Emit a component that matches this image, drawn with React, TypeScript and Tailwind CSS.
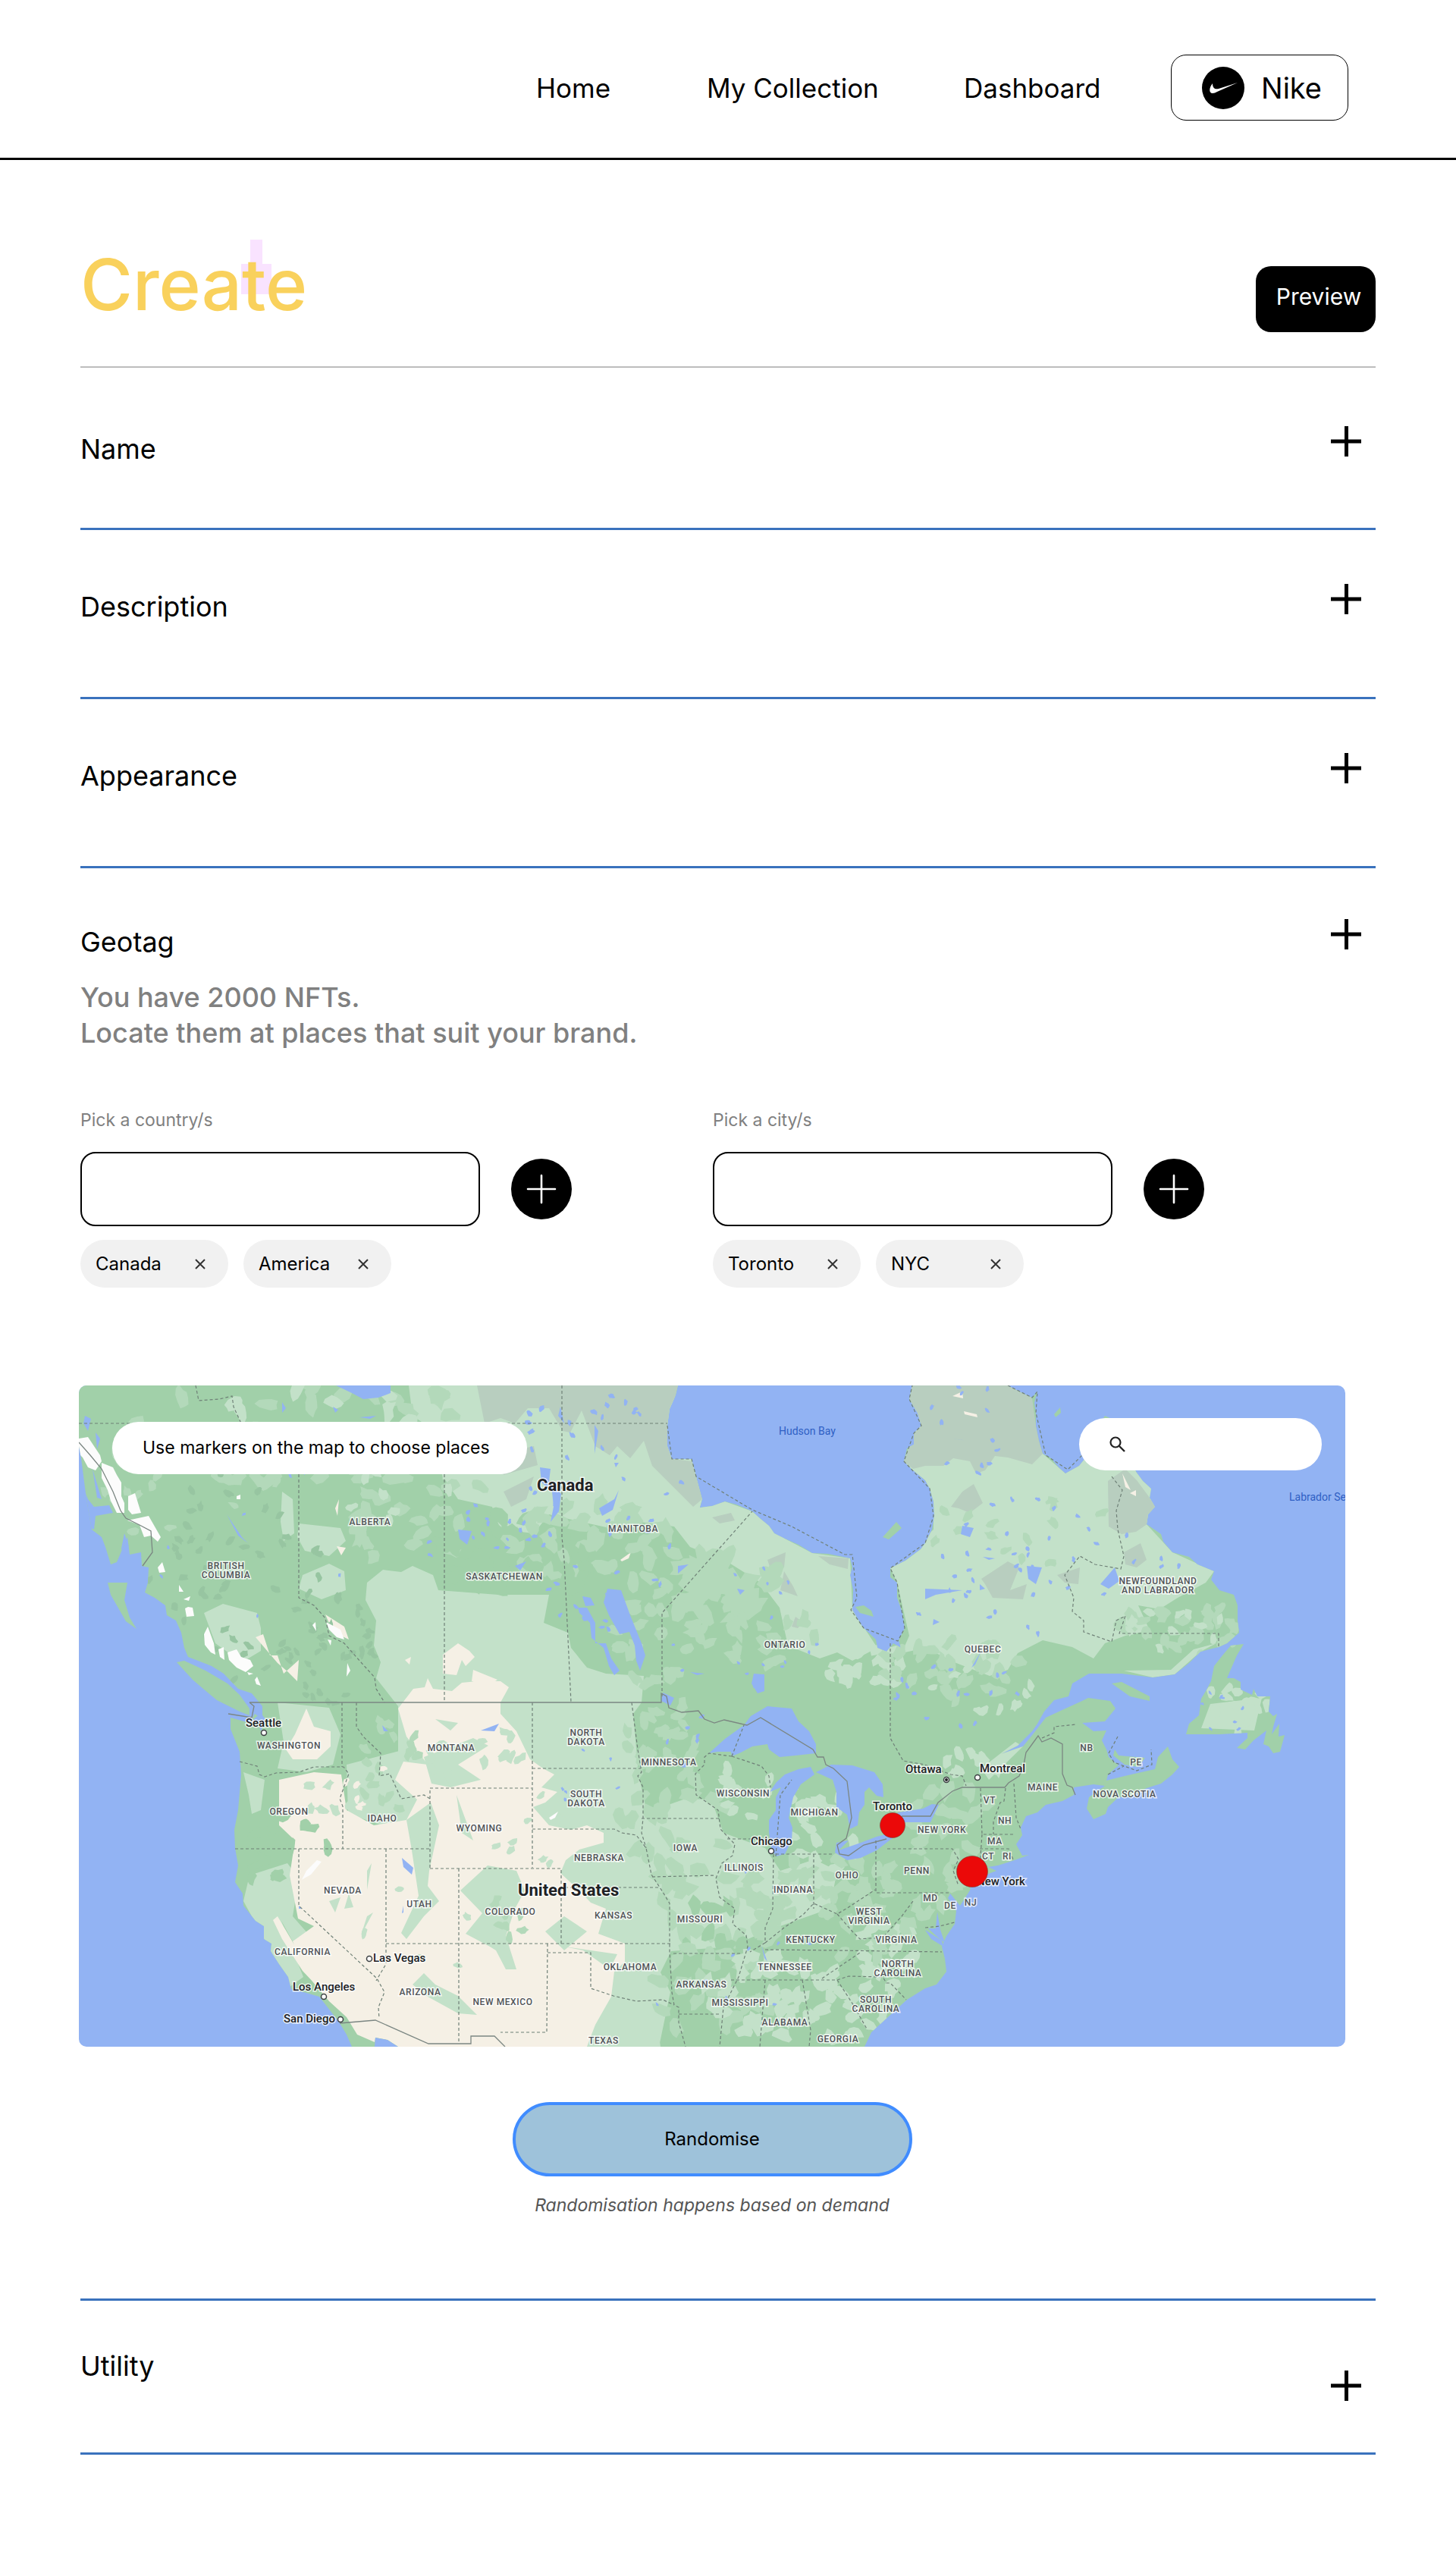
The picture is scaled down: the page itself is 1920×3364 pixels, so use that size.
import { useState } from 'react'

const navLinks = [
  { label: 'Home', width: 'w-[225px]' },
  { label: 'My Collection', width: 'w-[339px]' },
  { label: 'Dashboard', width: 'w-[273px]' },
]

const stateLabels: [number, number, string[]][] = [
  [384, 184, ['ALBERTA']],
  [194, 242, ['BRITISH', 'COLUMBIA']],
  [561, 256, ['SASKATCHEWAN']],
  [731, 193, ['MANITOBA']],
  [931, 346, ['ONTARIO']],
  [1192, 352, ['QUEBEC']],
  [1423, 262, ['NEWFOUNDLAND', 'AND LABRADOR']],
  [277, 479, ['WASHINGTON']],
  [277, 566, ['OREGON']],
  [400, 575, ['IDAHO']],
  [491, 482, ['MONTANA']],
  [528, 588, ['WYOMING']],
  [348, 670, ['NEVADA']],
  [449, 688, ['UTAH']],
  [569, 698, ['COLORADO']],
  [295, 751, ['CALIFORNIA']],
  [450, 804, ['ARIZONA']],
  [559, 817, ['NEW MEXICO']],
  [669, 462, ['NORTH', 'DAKOTA']],
  [669, 543, ['SOUTH', 'DAKOTA']],
  [778, 501, ['MINNESOTA']],
  [876, 542, ['WISCONSIN']],
  [970, 567, ['MICHIGAN']],
  [800, 614, ['IOWA']],
  [686, 627, ['NEBRASKA']],
  [877, 640, ['ILLINOIS']],
  [942, 669, ['INDIANA']],
  [1013, 650, ['OHIO']],
  [705, 703, ['KANSAS']],
  [819, 708, ['MISSOURI']],
  [965, 735, ['KENTUCKY']],
  [1042, 698, ['WEST', 'VIRGINIA']],
  [1078, 735, ['VIRGINIA']],
  [931, 771, ['TENNESSEE']],
  [1080, 767, ['NORTH', 'CAROLINA']],
  [727, 771, ['OKLAHOMA']],
  [821, 794, ['ARKANSAS']],
  [872, 818, ['MISSISSIPPI']],
  [1051, 814, ['SOUTH', 'CAROLINA']],
  [931, 844, ['ALABAMA']],
  [1001, 866, ['GEORGIA']],
  [692, 868, ['TEXAS']],
  [1138, 590, ['NEW YORK']],
  [1105, 644, ['PENN']],
  [1123, 680, ['MD']],
  [1149, 690, ['DE']],
  [1176, 686, ['NJ']],
  [1199, 625, ['CT']],
  [1224, 625, ['RI']],
  [1208, 605, ['MA']],
  [1221, 578, ['NH']],
  [1201, 551, ['VT']],
  [1271, 534, ['MAINE']],
  [1329, 482, ['NB']],
  [1394, 501, ['PE']],
  [1379, 543, ['NOVA SCOTIA']],
]

const cities = [
  { name: 'Seattle', x: 220, y: 450, dot: [244, 458] },
  { name: 'Las Vegas', x: 388, y: 760, dot: [383, 756] },
  { name: 'Los Angeles', x: 282, y: 798, dot: [323, 806] },
  { name: 'San Diego', x: 270, y: 840, dot: [345, 836] },
  { name: 'Chicago', x: 886, y: 606, dot: [913, 614] },
  { name: 'Toronto', x: 1047, y: 560, dot: null },
  { name: 'Ottawa', x: 1090, y: 511, dot: [1144, 520] },
  { name: 'Montreal', x: 1188, y: 510, dot: [1185, 517] },
  { name: 'New York', x: 1184, y: 659, dot: null },
]

const land = [
  // mainland, clockwise from the north-west corner
  'M0 0H790L787 13 779 31 776 53V80L782 97H808L814 120 822 150 819 161 835 159 852 153 867 157 888 166 899 176 910 185 917 195 931 202 949 210 967 221 988 222 1017 228 1020 240 1017 250 1021 270 1020 296 1033 318 1051 335 1053 346 1065 351 1074 340 1084 346 1081 336 1089 320 1086 300 1079 280V260L1070 253V241L1090 231 1110 216 1116 208 1125 190 1128 172 1127 153 1122 136 1116 125 1099 111 1088 100 1092 83 1101 78V63L1111 53 1106 36 1095 18 1099 0H1225L1240 8 1257 16 1264 8 1260 23 1262 36V53L1266 73 1271 90 1282 96 1292 108 1301 116 1319 106 1327 96 1334 70 1353 40 1362 44 1380 90 1395 115 1403 126 1414 136 1412 148 1419 160 1410 170 1408 183 1427 196 1430 206 1442 220 1464 226 1475 236 1497 245 1493 256 1504 270 1523 276 1528 290V310L1530 326 1514 340 1503 345 1479 351 1464 366 1445 381 1416 385 1375 380H1332L1310 393 1305 410 1286 415 1273 430 1264 446 1257 456 1238 475 1216 486 1245 476 1258 460 1275 438 1301 426 1323 416 1331 412 1360 416 1367 426 1353 443 1323 445 1338 456 1355 455 1349 468 1355 480 1358 490 1371 501 1357 513 1355 521 1375 516 1392 512 1419 506 1423 490 1436 476 1442 493 1451 503 1442 513 1427 525 1408 531 1386 543 1371 543 1357 556 1354 565 1338 572 1329 558 1332 543 1353 528 1338 526 1312 530V540L1297 548 1275 553 1264 563 1249 568 1242 583 1244 593 1236 605 1244 620 1253 619 1234 626 1212 633 1199 635 1210 640 1194 646 1178 650 1175 666 1162 686 1149 670 1146 676 1157 693 1155 710 1144 726 1138 740 1142 756 1144 773 1131 790 1116 795 1092 810 1070 830 1045 853 1036 872H421L407 863 391 860 390 872H360L353 856 344 841 328 820 317 806 300 801 280 796 276 780 264 763 253 746 254 736 244 730V713L233 706 217 686 216 670 206 655 210 633 206 610 205 586 210 560 214 513 212 483 200 453V438L225 445 232 433 242 440V423L228 406 210 400 191 380 175 370 144 358 139 346 135 326 128 310 116 303 114 290 100 280 87 273 91 260 92 240 83 238 82 220 67 223 64 200 50 233 42 236 35 213 30 200 17 190 14 173 10 150 3 96 0 80Z',
  // Vancouver Island
  'M129 365 139 363 167 376 196 393 212 408 225 426V435L212 430 182 415 164 400 150 388Z',
  // Haida Gwaii
  'M38 260H64L60 283 67 306 76 321 62 311 50 290 42 276Z',
  // Newfoundland
  'M1508 356 1519 343 1536 341 1527 356 1514 386H1523L1532 391V401L1547 408 1549 400 1554 410H1571L1569 430 1575 436 1580 433 1575 450 1573 460 1583 446 1582 463 1590 461 1584 483 1575 485 1569 476 1562 473 1566 455 1549 468 1538 480 1527 478 1541 465V458L1504 460H1460L1464 446 1477 435 1480 413 1486 403 1493 390 1497 370Z',
  // Anticosti and Prince Edward Island
  'M1362 393 1375 391 1412 410V416L1386 410Z',
  'M1366 480 1371 488 1406 491 1397 503 1379 500 1364 488Z',
  // islands in the bays
  'M1024 292 1035 290 1045 297 1048 305 1030 300ZM1286 38 1294 29 1295 36 1288 42ZM1060 200 1078 180 1085 188 1068 203Z',
].join('')

const lightLand =
  'M380 260 401 243 425 246 440 238 467 250 474 270 553 276 620 276 613 313 645 326 649 346 670 372 695 380 745 383 742 418 731 433 738 513 749 563 800 545 834 546 850 590 905 610 925 640 970 625 1000 640 990 690 905 720 860 740 781 746 756 796 767 872H560L421 600V423L392 386 398 365 389 343 392 310 378 283Z' +
  'M435 0H790L776 53 782 97 808 97 822 150 819 161 852 153 888 166 931 202 967 221 1017 228 1020 296 1053 346 1020 363 1000 352 977 360 935 343 924 293 899 260 856 233 806 213 785 186 740 180 700 188 663 180 620 170 600 195 556 190 545 160 500 150 480 120 470 60 440 40Z' +
  'M1085 353 1095 330 1079 260 1070 241 1127 190V153L1088 100 1101 63 1095 0H1225L1257 60 1271 90 1301 116 1327 96 1360 43 1395 115 1414 136 1419 160 1408 183 1442 220 1497 245 1486 260 1449 280 1425 295 1397 290 1412 323 1380 330 1353 340 1338 360 1310 345 1271 336 1238 353 1225 375 1201 383 1157 366 1116 346Z' +
  'M1378 376 1440 375 1470 348 1500 340 1479 351 1445 381 1416 385Z' +
  'M1190 505 1235 470 1245 476 1200 520Z' +
  'M165 300 190 288 235 300 240 320 240 350 215 365 180 340Z' +
  'M295 250 330 235 350 245 352 270 320 282 290 268Z' +
  'M290 182 345 188 352 205 330 225 298 218 288 200Z' +
  'M268 140 282 150 284 195 270 205 266 180ZM95 60 112 55 110 78 98 80Z' +
  'M217 510 245 520 240 560 228 565 224 540ZM225 646 275 630 290 650 282 700 317 740V773L300 766 267 706 296 780 278 793 246 733 217 680Z' +
  'M262 418 330 425 345 460 335 500 300 510 262 505 270 470ZM353 500 430 480 440 570 400 580 355 565Z' +
  'M1492 420 1560 412 1550 455 1480 452Z' +
  'M700 800 760 760 780 800 765 872H680Z'

const tundra =
  'M525 0H790L787 13 779 31 776 80 784 97 808 100 814 120 822 150 810 160 780 130 756 106 745 73 727 96 710 80 700 92 681 80 663 33 648 62 638 60 620 30 592 30 575 50 556 43 535 50Z' +
  'M1099 0H1225L1257 16 1262 53 1271 90 1257 104 1225 95 1208 93 1195 112 1183 116 1175 100 1153 96 1140 106 1116 106 1100 110 1088 100 1101 63 1111 53 1095 18Z' +
  'M1357 126 1380 110 1395 125 1412 148 1423 160 1410 182 1394 193 1375 196 1358 186Z' +
  'M975 225 1015 228 1014 242 990 236ZM908 230 932 220 930 240 915 250ZM930 245 942 265 948 278 925 270ZM945 305 955 312 948 320 940 318ZM835 174 860 168 865 178 845 182Z' +
  'M1190 255 1225 232 1240 240 1228 270 1250 262 1245 282 1205 280 1195 262ZM1150 160 1165 140 1180 130 1192 155 1175 168 1160 162ZM1378 220 1400 208 1408 230 1395 240 1380 236ZM1290 250 1320 240 1318 262 1300 260ZM560 140 600 120 590 150 570 160ZM555 90 600 80 605 105 560 118Z'

const beige =
  'M421 426 441 400 456 398 460 386 467 400 492 403 505 392 525 390 556 390 567 398 556 418V433L577 456 595 493 612 505 627 513 610 530 631 536 615 550 599 556 620 580 649 586 670 580 692 590V603L660 612 642 626 635 643 660 666 675 682 695 690 685 723 720 736V760L706 773 702 806 681 843 670 872H421L407 863 391 860 390 866 367 856 353 833 330 812 303 780 282 733 310 713 289 703 278 646 285 600 264 580V520L310 510 346 513 353 560 389 580 432 573 446 546 417 520 428 496 460 500 445 480 432 463Z' +
  'M300 426 310 450 332 456V476L314 493 282 493 273 480 285 460Z' +
  'M233 332 243 328 252 356 262 356 270 380 290 362 288 390 276 378 262 366Z' +
  'M480 355 500 340 515 350 522 358 510 370 505 362 498 382 480 380ZM430 362 438 358 436 368ZM520 375 552 388 540 396 518 390ZM340 212 352 214 346 224ZM338 162 343 150 341 172ZM325 302 350 318 356 335 335 325Z' +
  'M714 230 728 220 725 228 716 232ZM801 292 818 290 815 296 802 297ZM765 182 778 184 768 186ZM1152 14 1165 8 1166 17ZM1167 34 1184 38 1185 42 1168 38ZM1376 116 1387 138 1380 134ZM1386 142 1394 138 1394 146Z' +
  'M262 700 275 722 300 765 312 790 295 772 268 730 256 705Z'

const beigeCover =
  'M432 573 464 550 475 580 462 640 460 660 475 680 455 700 432 730 425 722 440 690 448 673 439 613Z' +
  'M539 633 577 640 588 666 575 690 563 726 577 770 563 770 550 745 542 740 510 723 532 696 503 666Z' +
  'M455 490 520 465 540 475 500 500 530 520 490 530 465 525ZM470 440 500 445 490 455ZM440 790 455 775 470 790 500 805 525 830 500 828 460 806ZM498 540 520 600 505 590ZM615 720 640 700 670 720 640 745ZM380 640 386 630 380 665ZM330 680 345 675 338 695ZM356 670 362 688 350 690ZM380 700 388 695 372 725ZM640 740 710 750 700 770 665 745Z'

const snow =
  'M0 70 12 68 28 92 30 100 22 112 12 108 5 95 0 90ZM30 102 45 108 50 118 56 128V146L60 155V168L50 168 42 152 38 138 30 122ZM65 146 74 142 82 168 70 170 65 164ZM64 178 92 172 100 186 108 200 104 206 95 198 86 200 80 184ZM104 240 110 233 114 246 106 247ZM132 263 138 272 132 272ZM138 282 147 278 145 284ZM140 294 144 292 150 293 152 304 142 305ZM165 328 170 318 178 340 180 355 174 352 166 342ZM184 348 191 345 192 362 186 358ZM196 352 208 348 214 358 226 362 230 370 220 378 208 372 198 362ZM222 378 230 380 224 382ZM232 388 235 384 240 396 234 394ZM208 146 213 144 213 150 208 150ZM326 312 345 322 350 335 340 332 330 322ZM308 316 312 312 313 324ZM328 335 333 336 332 343ZM354 366 358 376 353 384ZM294 652 300 640 314 626 320 628 306 645 297 650ZM620 570 632 562 628 570 622 573Z'

const lakes =
  // Great Lakes
  'M831 485 852 466 877 448 886 436 908 423 940 426 949 443 963 456 972 473V485L945 488 924 490 910 480 908 473 888 476 873 484 861 489 860 483 842 483Z' +
  'M965 503 970 513 952 526 942 543 936 570 941 583 940 600 931 618 919 621 913 610 910 590V573L919 560V543L926 530 911 536 920 523 931 513 949 506Z' +
  'M972 510 992 500 1020 501 1049 510 1060 526 1061 543 1052 541 1042 530 1036 536V553L1029 563 1027 580 1017 585 1013 566 999 556V536L994 520Z' +
  'M999 603 1015 600 1002 613 1031 603 1052 595 1072 590 1074 596 1052 613 1031 623 1013 626 997 616Z' +
  'M1067 573 1081 563 1113 558 1125 552 1134 553 1123 576 1085 576 1070 578Z' +
  // Manitoba
  'M697 268 715 270 727 303 742 340 747 356 740 376 735 363 733 343 726 325 713 328 699 303 692 286Z' +
  'M658 293 670 293 681 313V340L695 340 702 360 713 376 706 382 699 370 692 346 676 333 674 313 660 300Z' +
  'M664 278 675 280 680 290 668 291ZM608 108 622 110 620 126 636 143 633 166 622 180 626 160 624 140 610 128Z' +
  'M339 0H411V10L395 16 375 18 360 10ZM890 380 904 381V403L895 406 887 393ZM426 623 441 636 439 645 428 635ZM770 405 785 412 780 422 768 416Z' +
  'M268 22 273 30 268 36ZM370 42 392 40 384 44ZM335 28 342 32 338 36ZM575 238 590 232 582 244ZM790 238 804 236 790 248ZM868 268 878 270 872 276ZM686 162 706 150 712 138 704 164 690 172ZM706 102 712 102 708 108ZM500 190 518 192 512 210 502 202ZM195 170 215 200 223 208 210 198ZM635 28 640 50 632 40ZM680 52 685 60 680 90ZM1165 185 1180 188 1175 200 1163 196ZM1250 238 1270 240 1262 262 1252 255ZM1347 262 1366 240 1372 258 1358 268ZM1192 226 1208 228 1200 230ZM1116 268 1165 270 1130 276 1116 282ZM1177 372 1190 350 1182 368ZM1127 308 1135 312 1126 316ZM1188 262 1195 268 1188 270ZM1150 70 1190 75 1165 72ZM806 378 825 380 815 382ZM290 686 294 690 290 690ZM426 696 428 686 428 695ZM900 738 908 760 904 755ZM530 455 554 446 548 456ZM400 448 408 456 402 456Z' +
  'M8 40 16 44 12 60 6 50ZM22 62 28 70 24 84ZM0 120 12 150 20 160 40 158 45 168 22 172 20 190 8 184ZM18 110 24 130 30 150 24 148ZM60 195 66 212 60 235 56 215Z' +
  'M225 445 240 432 246 440 240 456 236 444ZM1132 694 1136 718 1142 735 1133 728 1120 716 1130 716ZM1116 718 1138 732 1140 740 1124 730Z'

const dashedBorders =
  'M0 50H72M154 0 158 20 185 18 202 14 204 28 214 50M214 50H776M290 117V280L310 290 325 307 330 330 350 340 372 365 390 385 392 400 403 418M482 117V418M637 0V200L640 230 649 418M769 410V300L888 166M1070 340V465L1087 495 1115 500 1150 513 1165 515 1170 528' +
  'M776 53 782 97 808 97 814 120 888 164 940 186 1010 223H1020L1026 280 1018 296 1035 320 1080 337 1089 320 1079 260 1070 241 1116 208 1127 172 1122 136 1088 100 1101 63 1111 53 1095 18 1099 0M1225 0 1257 16 1264 8 1262 36 1275 92 1304 111 1325 90' +
  'M1362 120 1376 138 1368 165 1370 190 1378 225 1374 242 1340 236 1320 225 1300 250 1312 280 1310 298 1325 310 1325 325 1362 338 1368 310 1380 304 1372 327H1503V345' +
  'M212 496 235 502 238 513 245 516 260 511 290 510 310 503H349L356 512 344 545 348 555V611M347 418V503M366 418V450L375 463 398 485 396 515 410 512 425 545 455 540 463 545V636M463 545V531H597M206 611H463M290 611V686L393 782 403 800 395 820 396 835M405 611V763L392 785M405 736H780M463 637H636V662H765M501 637V868M598 418V636M598 505H741M598 585H706L716 590 735 593 748 610 755 645 770 668 779 683V746L782 800 785 817 791 820V840L800 872' +
  'M636 662V736M618 736 617 853H556M618 748H675V795L705 805 735 812 770 810 785 817M729 418 737 480 742 510 737 515 744 530V571L742 590 748 610M742 571H845M756 648 840 646M861 489 831 485 825 490V500L813 512 814 540 843 560 846 585 865 605 862 620 848 630 840 650 845 675 865 690 862 710 880 725 882 740 870 780 850 820 845 872' +
  'M784 749H875M791 829H845M855 598H915M916 618 915 690 905 715V735L885 747M969 618V690M919 618H995M1051 600V669H1150M905 735 930 715 955 698 969 683 1000 697 1012 690 1050 665M1000 697 1020 720 1030 730 1060 728 1085 700 1100 680M905 744 1000 745 1138 747M860 784H1000L1015 779 1060 780 1065 788H1070L1091 810M980 782 1030 748M905 784 898 872M954 784 965 850 963 872M1000 784 1020 815 1040 850M1066 611H1152L1160 625 1153 640 1160 660M861 489 900 502 910 515 912 530M861 489 877 448M919 621 925 540 940 520' +
  'M1189 531 1191 592H1235M1191 592 1188 635M1188 611H1226L1232 625M1222 531 1220 548 1215 550 1206 575V592M1233 525 1236 570 1242 585M1270 465 1286 458V450L1315 447M1370 463 1358 485 1365 497 1395 508 1415 500 1414 480M1357 513 1378 502M1116 715 1135 713 1155 708'

const solidBorders =
  'M225 418H768V406L775 410 778 425 795 431 817 429 825 440 838 445 851 441 881 448 899 438 968 480 974 490H982L985 500 995 505 1013 522 1019 570 1012 597 1000 606 1003 618 1015 620 1035 606 1065 598M1085 568H1123L1133 550 1152 535 1165 530H1221L1226 524 1240 515 1246 500 1249 484 1265 462 1270 470 1282 465 1297 473V512L1303 527 1310 530 1314 540' +
  'M225 418 231 423 228 438 197 433M344 841 391 837 461 868H517V858H548L562 872M0 75 15 92 30 110 45 140 55 165 62 175 80 184 95 192 97 220 84 238'

// Small deterministic generator, keeps the terrain stable between renders
function seeded(seed: number) {
  let s = seed
  return () => {
    s = (s * 16807) % 2147483647
    return s / 2147483647
  }
}

type Zone = [cx: number, cy: number, rx: number, ry: number, count: number, size: number, fill: string]

const GREEN = '#a1d0a9'
const MID = '#b3d9ba'
const LIGHT = '#c3e1c9'
const DARK = '#97c5a1'
const WATER = '#92b3f3'
const SAND = '#f5f0e5'

const zones: Zone[] = [
  [300, 60, 280, 70, 34, 15, MID],
  [340, 60, 170, 60, 12, 14, LIGHT],
  [200, 240, 120, 150, 50, 7, DARK],
  [330, 350, 60, 80, 40, 6, DARK],
  [150, 150, 120, 60, 12, 8, MID],
  [450, 170, 90, 80, 20, 13, MID],
  [440, 140, 90, 60, 10, 9, LIGHT],
  [560, 220, 90, 50, 26, 15, GREEN],
  [680, 210, 110, 60, 40, 14, MID],
  [650, 240, 70, 30, 14, 12, GREEN],
  [850, 270, 80, 45, 34, 18, MID],
  [760, 330, 60, 70, 24, 12, MID],
  [900, 330, 90, 40, 18, 11, MID],
  [1040, 370, 70, 26, 20, 11, LIGHT],
  [1150, 375, 100, 40, 30, 12, MID],
  [1190, 395, 70, 40, 10, 8, LIGHT],
  [1450, 320, 80, 40, 26, 11, MID],
  [1450, 320, 70, 30, 12, 8, LIGHT],
  [1230, 190, 130, 60, 14, 9, MID],
  [1525, 430, 50, 40, 14, 9, LIGHT],
  [770, 470, 50, 60, 26, 11, MID],
  [790, 590, 80, 80, 22, 15, MID],
  [850, 690, 90, 60, 28, 15, MID],
  [840, 720, 60, 40, 12, 13, GREEN],
  [980, 600, 60, 60, 20, 12, LIGHT],
  [960, 660, 80, 60, 24, 13, MID],
  [900, 530, 60, 40, 14, 10, LIGHT],
  [830, 800, 80, 60, 24, 14, MID],
  [900, 800, 90, 60, 28, 14, LIGHT],
  [1000, 820, 70, 50, 22, 12, LIGHT],
  [1080, 750, 60, 50, 18, 12, LIGHT],
  [1040, 700, 60, 60, 18, 12, MID],
  [1110, 650, 60, 50, 14, 12, MID],
  [1140, 570, 60, 50, 14, 14, MID],
  [1180, 495, 50, 20, 8, 10, LIGHT],
  [400, 500, 50, 70, 18, 9, MID],
  [520, 480, 70, 40, 14, 9, LIGHT],
  [330, 540, 40, 30, 8, 9, LIGHT],
  [450, 720, 80, 100, 6, 7, LIGHT],
  [270, 620, 60, 60, 12, 11, GREEN],
  [600, 600, 60, 60, 8, 7, LIGHT],
  [570, 700, 30, 50, 8, 8, MID],
  [380, 530, 40, 30, 6, 6, SAND],
  [300, 200, 270, 120, 12, 3, WATER],
  [540, 200, 90, 60, 12, 4, WATER],
  [690, 180, 120, 160, 40, 4, WATER],
  [660, 30, 100, 40, 10, 5, WATER],
  [880, 320, 110, 90, 16, 3, WATER],
  [1180, 60, 70, 60, 12, 4, WATER],
  [1220, 250, 140, 110, 36, 4, WATER],
  [1150, 400, 90, 50, 16, 4, WATER],
  [1400, 250, 60, 60, 8, 4, WATER],
  [830, 470, 70, 40, 8, 4, WATER],
  [680, 520, 60, 60, 6, 3, WATER],
  [850, 730, 150, 120, 10, 3, WATER],
  [1515, 430, 40, 30, 8, 3, WATER],
]

const rand = seeded(4217)

const terrain = zones.map(([cx, cy, rx, ry, count, size, fill]) => {
  let d = ''
  for (let i = 0; i < count; i++) {
    const a = rand() * Math.PI * 2
    const k = Math.sqrt(rand())
    const x = cx + Math.cos(a) * rx * k
    const y = cy + Math.sin(a) * ry * k
    const tilt = rand() * Math.PI
    const steps = 10
    for (let j = 0; j < steps; j++) {
      const t = (j / steps) * Math.PI * 2
      const r = size * (0.65 + rand() * 0.6)
      const px = Math.cos(t) * r
      const py = Math.sin(t) * r * 0.6
      const qx = x + px * Math.cos(tilt) - py * Math.sin(tilt)
      const qy = y + px * Math.sin(tilt) + py * Math.cos(tilt)
      d += `${j ? 'L' : 'M'}${qx.toFixed(1)} ${qy.toFixed(1)}`
    }
    d += 'Z'
  }
  return { d, fill }
})

function TerrainMap() {
  return (
    <svg
      viewBox="0 0 1670 872"
      className="block w-full h-auto rounded-[10px] font-[Roboto,sans-serif]"
      role="img"
      aria-label="Map of North America"
    >
      <defs>
        <clipPath id="land">
          <path d={land} />
        </clipPath>
      </defs>
      <rect width="1670" height="872" fill={WATER} />
      <path d={land} fill={GREEN} />
      <g clipPath="url(#land)">
        <path d={lightLand} fill={LIGHT} />
        <path d={tundra} fill="#b8cebf" />
        <path d={beige} fill={SAND} />
        <path d={beigeCover} fill={LIGHT} />
        {terrain.map((t, i) => (
          <path key={i} d={t.d} fill={t.fill} />
        ))}
        <path d={snow} fill="#fcfcfc" />
        <path d={lakes} fill={WATER} />
      </g>
      <path d={dashedBorders} fill="none" stroke="#6f8077" strokeWidth="1.2" strokeDasharray="4 3" />
      <path d={solidBorders} fill="none" stroke="#7b8682" strokeWidth="1.3" />

      <g fill="#505357" stroke="#ffffff" strokeOpacity="0.75" strokeWidth="3" paintOrder="stroke">
        {stateLabels.map(([x, y, lines]) => (
          <text key={`${x}-${y}`} textAnchor="middle" className="text-[12px] font-medium tracking-wider">
            {lines.map((line, i) => (
              <tspan key={line} x={x} y={y + i * 12}>
                {line}
              </tspan>
            ))}
          </text>
        ))}
      </g>
      <g fill="#202124" stroke="#ffffff" strokeOpacity="0.75" strokeWidth="3" paintOrder="stroke">
        {cities.map((c) => (
          <text key={c.name} x={c.x} y={c.y} className="text-[15px] font-medium">
            {c.name}
          </text>
        ))}
        <text x="604" y="139" className="text-[22px] font-bold">Canada</text>
        <text x="579" y="673" className="text-[22px] font-bold">United States</text>
      </g>
      <g fill="#2f5fc4" className="text-[14px]">
        <text x="923" y="65">Hudson Bay</text>
        <text x="1596" y="152">Labrador Se</text>
      </g>

      {cities.map(
        (c) =>
          c.dot && (
            <circle key={c.name} cx={c.dot[0]} cy={c.dot[1]} r="3.5" fill="#fff" stroke="#3c4043" strokeWidth="1.5" />
          ),
      )}
      <circle cx="1144" cy="520" r="2" fill="#202124" />

      <circle cx="1073" cy="580" r="16.5" fill="#eb0909" stroke="#7c3b32" strokeWidth="0.6" />
      <circle cx="1178" cy="641" r="20.5" fill="#eb0909" stroke="#7c3b32" strokeWidth="0.6" />
    </svg>
  )
}

function PlusIcon() {
  return (
    <svg viewBox="0 0 40 40" className="w-10 h-10" aria-hidden="true">
      <path d="M20.5 0V40M0 20H40" stroke="#000" strokeWidth="5" />
    </svg>
  )
}

function SectionHeading({ title, className }: { title: string; className: string }) {
  return (
    <div className={`flex items-start justify-between pr-[19px] ${className}`}>
      <h2 className="pt-1.5 text-4xl leading-[48px]">{title}</h2>
      <button type="button" aria-label={`Expand ${title}`}>
        <PlusIcon />
      </button>
    </div>
  )
}

function PlacePicker({ id, label, initial }: { id: string; label: string; initial: string[] }) {
  const [places, setPlaces] = useState(initial)
  const [value, setValue] = useState('')

  const addPlace = () => {
    const name = value.trim()
    if (name && !places.includes(name)) setPlaces([...places, name])
    setValue('')
  }

  return (
    <div>
      <label htmlFor={id} className="block text-[23px] leading-8 text-[#808080]">
        {label}
      </label>
      <div className="mt-[26px] flex items-center gap-[41px]">
        <input
          id={id}
          value={value}
          onChange={(e) => setValue(e.target.value)}
          className="w-[527px] h-[98px] px-6 text-2xl border-2 border-black rounded-[20px] outline-none"
        />
        <button
          type="button"
          onClick={addPlace}
          aria-label={`Add to ${label}`}
          className="flex items-center justify-center w-20 h-20 rounded-full bg-black"
        >
          <svg viewBox="0 0 40 40" className="w-10 h-10" aria-hidden="true">
            <path d="M20 2V38M2 20H38" stroke="#fff" strokeWidth="2.6" strokeLinecap="round" />
          </svg>
        </button>
      </div>
      <ul className="mt-[18px] flex gap-5">
        {places.map((place) => (
          <li
            key={place}
            className="flex items-center justify-between w-[195px] h-[63px] pl-5 pr-[30px] rounded-full bg-[#f1f1f1]"
          >
            <span className="text-2xl leading-8">{place}</span>
            <button
              type="button"
              aria-label={`Remove ${place}`}
              onClick={() => setPlaces(places.filter((p) => p !== place))}
            >
              <svg viewBox="0 0 14 14" className="w-3.5 h-3.5" aria-hidden="true">
                <path d="M1 1L13 13M13 1L1 13" stroke="#333" strokeWidth="2" />
              </svg>
            </button>
          </li>
        ))}
      </ul>
    </div>
  )
}

export default function App() {
  return (
    <div className="min-h-screen bg-white text-black font-[Inter,sans-serif]">
      <header className="flex items-center justify-end pt-[72px] pb-[49px] pr-[142px] border-b-3 border-black">
        <nav className="flex">
          {navLinks.map((link) => (
            <a key={link.label} href="#" className={`text-[35px] leading-[48px] ${link.width}`}>
              {link.label}
            </a>
          ))}
        </nav>
        <button
          type="button"
          className="flex items-center gap-[22px] w-[234px] h-[87px] pl-10 border border-black rounded-[20px]"
        >
          <svg viewBox="0 0 56 56" className="w-14 h-14" aria-hidden="true">
            <circle cx="28" cy="28" r="28" fill="#000" />
            <path d="M14 22C9 28 9 35 14 35C16 35 18 34 20 33L47 21L22 29C18 30 14 29 14 22Z" fill="#fff" />
          </svg>
          <span className="text-[38px] leading-[52px]">Nike</span>
        </button>
      </header>

      <main className="px-[106px] pb-[124px]">
        <div className="flex items-start justify-between pt-[105px] pb-[45px] border-b-2 border-[#bdbdbd]">
          <div className="relative">
            <svg viewBox="0 0 40 72" className="absolute left-[212px] top-0 w-10 h-[72px]" aria-hidden="true">
              <path d="M12 0H28V32H40V72H0V32H12Z" fill="#f9e3ff" />
            </svg>
            <h1 className="relative text-[94px] leading-[118px] font-medium text-[#f9d15c]">Create</h1>
          </div>
          <button
            type="button"
            className="mt-[35px] w-[158px] h-[87px] pb-2 pl-2 rounded-[20px] bg-black text-[30px] leading-10 text-white"
          >
            Preview
          </button>
        </div>

        <section className="pb-20 border-b-3 border-[#3a72bd]">
          <SectionHeading title="Name" className="pt-[77px]" />
        </section>
        <section className="pb-[95px] border-b-3 border-[#3a72bd]">
          <SectionHeading title="Description" className="pt-[71px]" />
        </section>
        <section className="pb-[95px] border-b-3 border-[#3a72bd]">
          <SectionHeading title="Appearance" className="pt-[71px]" />
        </section>

        <section className="pb-[107px] border-b-3 border-[#3a72bd]">
          <SectionHeading title="Geotag" className="pt-[67px]" />
          <p className="mt-[26px] text-4xl leading-[47px] font-medium text-[#808080]">
            You have 2000 NFTs.
            <br />
            Locate them at places that suit your brand.
          </p>

          <div className="mt-[75px] grid grid-cols-[834px_1fr]">
            <PlacePicker id="country" label="Pick a country/s" initial={['Canada', 'America']} />
            <PlacePicker id="city" label="Pick a city/s" initial={['Toronto', 'NYC']} />
          </div>

          <div className="mt-[129px] -ml-0.5 mr-10">
            <div className="relative">
              <TerrainMap />
              <p className="absolute left-11 top-12 w-[547px] py-[18px] pl-10 rounded-full bg-white text-[23px] leading-[33px]">
                Use markers on the map to choose places
              </p>
              <label className="absolute right-[31px] top-[43px] flex items-center gap-4 w-80 h-[69px] px-10 rounded-full bg-white">
                <svg viewBox="0 0 22 22" className="shrink-0 w-[22px] h-[22px]" aria-hidden="true">
                  <circle cx="8" cy="8" r="6.5" fill="none" stroke="#222" strokeWidth="2.2" />
                  <path d="M13 13L20 20" stroke="#222" strokeWidth="2.4" />
                </svg>
                <input type="search" aria-label="Search the map" className="w-full text-[23px] outline-none" />
              </label>
            </div>

            <div className="mt-[73px] flex flex-col items-center">
              <button
                type="button"
                className="w-[527px] h-[98px] border-4 border-[#408cff] rounded-full bg-[#9ec2da] text-2xl leading-8"
              >
                Randomise
              </button>
              <p className="mt-[22px] text-[23px] leading-8 italic text-[#555555]">
                Randomisation happens based on demand
              </p>
            </div>
          </div>
        </section>

        <section className="pb-[68px] border-b-3 border-[#3a72bd]">
          <div className="flex items-start justify-between pt-[62px] pr-[19px]">
            <h2 className="text-4xl leading-[48px]">Utility</h2>
            <button type="button" aria-label="Expand Utility" className="mt-[30px]">
              <PlusIcon />
            </button>
          </div>
        </section>
      </main>
    </div>
  )
}
